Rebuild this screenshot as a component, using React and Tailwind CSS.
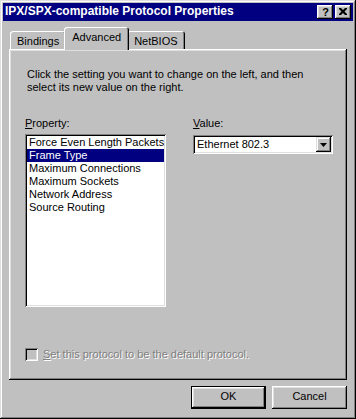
import React from "react";

const items = [
  "Force Even Length Packets",
  "Frame Type",
  "Maximum Connections",
  "Maximum Sockets",
  "Network Address",
  "Source Routing",
];

function CaptionButton({ children }) {
  return (
    <div className="w-[16px] h-[14px] bg-[#c0c0c0] flex items-center justify-center shadow-[inset_-1px_-1px_#000,inset_1px_1px_#fff,inset_-2px_-2px_#808080,inset_2px_2px_#dfdfdf]">
      {children}
    </div>
  );
}

function Tab({ label, selected }) {
  if (selected) {
    return (
      <div className="relative z-10 -mx-[2px] -mb-px h-[23px] px-[8px] pt-[4px] bg-[#c0c0c0] rounded-t-[3px] shadow-[inset_1px_1px_#fff,inset_-1px_0_#000,inset_-2px_0_#808080]">
        <span className="leading-[13px]">{label}</span>
      </div>
    );
  }
  return (
    <div className="h-[18px] px-[7px] pt-[4px] bg-[#c0c0c0] rounded-t-[3px] shadow-[inset_1px_1px_#fff,inset_-1px_0_#000,inset_-2px_0_#808080]">
      <span className="leading-[13px]">{label}</span>
    </div>
  );
}

function Button({ children, isDefault }) {
  return (
    <div
      className={
        isDefault
          ? "w-[75px] h-[23px] flex justify-center pt-[3px] border border-black shadow-[inset_-1px_-1px_#000,inset_1px_1px_#fff,inset_-2px_-2px_#808080,inset_2px_2px_#dfdfdf]"
          : "w-[75px] h-[23px] flex justify-center pt-[4px] shadow-[inset_-1px_-1px_#000,inset_1px_1px_#fff,inset_-2px_-2px_#808080,inset_2px_2px_#dfdfdf]"
      }
    >
      {children}
    </div>
  );
}

export default function App() {
  return (
    <div className="w-[356px] h-[419px] bg-[#c0c0c0] p-[3px] flex flex-col text-[11px] leading-[13px] text-black font-['Liberation_Sans',Arial,sans-serif] shadow-[inset_-1px_-1px_#000,inset_1px_1px_#dfdfdf,inset_-2px_-2px_#808080,inset_2px_2px_#fff]">
      {/* title bar */}
      <div className="h-[18px] bg-[#000080] flex items-start justify-between pl-[2px] pr-[2px]">
        <span className="pt-[1px] text-white font-bold text-[12px] leading-[14px]">
          IPX/SPX-compatible Protocol Properties
        </span>
        <div className="flex gap-[2px] pt-[2px]">
          <CaptionButton>
            <span className="font-bold text-[11px] leading-[11px] pl-px">?</span>
          </CaptionButton>
          <CaptionButton>
            <svg width="8" height="7" viewBox="0 0 8 7" className="-mt-px">
              <path d="M0 0h2l2 2 2-2h2v1L5.5 3.5 8 6v1H6L4 5 2 7H0V6l2.5-2.5L0 1z" fill="#000" />
            </svg>
          </CaptionButton>
        </div>
      </div>

      <div className="flex-1 flex flex-col px-[6px]">
        {/* tabs */}
        <div className="mt-[6px] h-[22px] flex items-end pl-px">
          <Tab label="Bindings" />
          <Tab label="Advanced" selected />
          <Tab label="NetBIOS" />
        </div>

        {/* panel */}
        <div className="h-[331px] flex flex-col pt-[19px] pl-[16px] pb-[19px] shadow-[inset_-1px_-1px_#000,inset_1px_1px_#fff,inset_-2px_-2px_#808080,inset_2px_2px_#dfdfdf]">
          <p className="ml-[2px]">
            Click the setting you want to change on the left, and then
            <br />
            select its new value on the right.
          </p>

          <div className="mt-[23px] flex gap-[27px]">
            <div className="flex flex-col">
              <span>
                <u>P</u>roperty:
              </span>
              <div className="mt-[4px] w-[141px] h-[173px] bg-white p-[2px] shadow-[inset_1px_1px_#808080,inset_-1px_-1px_#fff,inset_2px_2px_#000,inset_-2px_-2px_#dfdfdf]">
                {items.map((item) => (
                  <div
                    key={item}
                    className={
                      item === "Frame Type"
                        ? "h-[13px] pl-[2px] bg-[#000080] text-white whitespace-nowrap"
                        : "h-[13px] pl-[2px] whitespace-nowrap"
                    }
                  >
                    {item}
                  </div>
                ))}
              </div>
            </div>

            <div className="flex flex-col">
              <span>
                <u>V</u>alue:
              </span>
              <div className="mt-[5px] w-[140px] h-[19px] bg-white flex justify-between p-[2px] shadow-[inset_1px_1px_#808080,inset_-1px_-1px_#fff,inset_2px_2px_#000,inset_-2px_-2px_#dfdfdf]">
                <span className="pl-[2px] pt-px">Ethernet 802.3</span>
                <div className="w-[15px] h-[15px] bg-[#c0c0c0] flex items-center justify-center shadow-[inset_-1px_-1px_#000,inset_1px_1px_#dfdfdf,inset_-2px_-2px_#808080,inset_2px_2px_#fff]">
                  <svg width="7" height="4" viewBox="0 0 7 4">
                    <path d="M0 0h7L3.5 4z" fill="#000" />
                  </svg>
                </div>
              </div>
            </div>
          </div>

          <div className="flex-1" />

          <div className="flex items-center gap-[5px]">
            <div className="w-[13px] h-[13px] bg-[#c0c0c0] shadow-[inset_1px_1px_#808080,inset_-1px_-1px_#fff,inset_2px_2px_#000,inset_-2px_-2px_#dfdfdf]" />
            <span className="text-[#808080] [text-shadow:1px_1px_0_#fff]">
              <u>S</u>et this protocol to be the default protocol.
            </span>
          </div>
        </div>

        {/* buttons */}
        <div className="mt-[6px] flex justify-end gap-[6px]">
          <Button isDefault>OK</Button>
          <Button>Cancel</Button>
        </div>
      </div>
    </div>
  );
}
